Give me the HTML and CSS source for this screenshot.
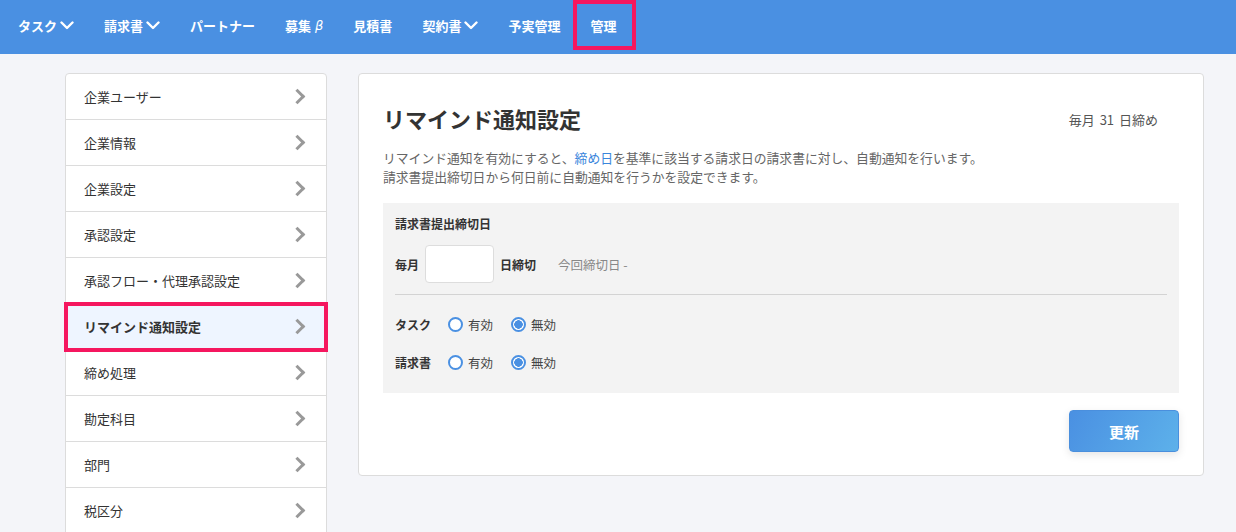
FILE: index.html
```html
<!DOCTYPE html>
<html lang="ja">
<head>
  <meta charset="UTF-8">
  <title>リマインド通知設定</title>
  <link rel="stylesheet" href="styles.css">
</head>
<body>

  <nav class="topnav">
    <a class="nav-item">タスク <svg class="caret" viewBox="0 0 14 9"><path d="M1.5 1.5 7 7l5.5-5.5"/></svg></a>
    <a class="nav-item">請求書 <svg class="caret" viewBox="0 0 14 9"><path d="M1.5 1.5 7 7l5.5-5.5"/></svg></a>
    <a class="nav-item">パートナー</a>
    <a class="nav-item">募集<i class="beta">β</i></a>
    <a class="nav-item">見積書</a>
    <a class="nav-item">契約書 <svg class="caret" viewBox="0 0 14 9"><path d="M1.5 1.5 7 7l5.5-5.5"/></svg></a>
    <a class="nav-item">予実管理</a>
    <a class="nav-item marked">管理</a>
  </nav>

  <div class="page">
    <ul class="side-menu">
      <li>企業ユーザー</li>
      <li>企業情報</li>
      <li>企業設定</li>
      <li>承認設定</li>
      <li>承認フロー・代理承認設定</li>
      <li class="active">リマインド通知設定</li>
      <li>締め処理</li>
      <li>勘定科目</li>
      <li>部門</li>
      <li>税区分</li>
    </ul>

    <section class="card">
      <div class="card-head">
        <h1>リマインド通知設定</h1>
        <span class="closing">毎月 31 日締め</span>
      </div>
      <p class="desc">
        リマインド通知を有効にすると、<a class="link">締め日</a>を基準に該当する請求日の請求書に対し、自動通知を行います。<br>
        請求書提出締切日から何日前に自動通知を行うかを設定できます。
      </p>

      <div class="settings">
        <div class="label">請求書提出締切日</div>
        <div class="deadline">
          <span class="strong">毎月</span>
          <input type="text" class="day-input">
          <span class="strong">日締切</span>
          <span class="muted">今回締切日 -</span>
        </div>
        <hr>
        <div class="radio-row">
          <span class="strong">タスク</span>
          <label class="radio"><span class="dot"></span>有効</label>
          <label class="radio"><span class="dot on"></span>無効</label>
        </div>
        <div class="radio-row">
          <span class="strong">請求書</span>
          <label class="radio"><span class="dot"></span>有効</label>
          <label class="radio"><span class="dot on"></span>無効</label>
        </div>
      </div>

      <div class="actions">
        <button class="btn-update">更新</button>
      </div>
    </section>
  </div>

</body>
</html>
```

FILE: styles.css
```css
* { box-sizing: border-box; }
body {
  margin: 0;
  background: #f4f5f9;
  color: #333;
  font-family: "Noto Sans CJK JP", "Noto Sans", "Liberation Sans", sans-serif;
  font-size: 13px;
  overflow: hidden;
}

/* top navigation */
.topnav {
  display: flex;
  align-items: flex-start;
  height: 54px;
  padding: 2px 0 0 3px;
  background: #4a90e2;
}

.nav-item {
  display: flex;
  align-items: center;
  gap: 3px;
  height: 46px;
  padding: 0 15px;
  color: #fff;
  font-weight: bold;
  font-size: 13px;
}

.nav-item .caret {
  width: 14px;
  height: 9px;
  fill: none;
  stroke: #fff;
  stroke-width: 2.4;
  stroke-linecap: round;
  stroke-linejoin: round;
}

.beta {
  font-family: "DejaVu Sans", sans-serif;
  font-weight: normal;
  font-style: italic;
  margin-left: 1px;
}

.marked {
  padding-right: 18px;
  outline: 4px solid #f5175f;
  outline-offset: -2px;
}

/* page */
.page {
  display: flex;
  align-items: flex-start;
  gap: 31px;
  padding: 19px 32px 0 65px;
}

.side-menu {
  list-style: none;
  margin: 0;
  padding: 0;
  width: 262px;
  flex: none;
  background: #fff;
  border: 1px solid #dcdcdc;
  border-radius: 4px 4px 0 0;
}

.side-menu li {
  display: flex;
  align-items: center;
  justify-content: space-between;
  height: 46px;
  padding: 0 23px 1px 18px;
  border-bottom: 1px solid #dcdcdc;
  font-size: 13px;
}

.side-menu li::after {
  content: "";
  width: 8px;
  height: 8px;
  border-top: 3px solid #999;
  border-right: 3px solid #999;
  transform: rotate(45deg);
}

.side-menu li.active {
  background: #eef5ff;
  font-weight: bold;
  outline: 4px solid #f5175f;
  outline-offset: -2px;
}

/* main card */
.card {
  flex: 1;
  background: #fff;
  border: 1px solid #dcdcdc;
  border-radius: 4px;
  padding: 29px 24px 23px 24px;
}

.card-head {
  display: flex;
  align-items: center;
  justify-content: space-between;
}

.card-head h1 {
  margin: 0;
  font-size: 22px;
  line-height: 30px;
  color: #333;
}

.closing {
  margin: 3px 21px 0 0;
  color: #555;
  font-size: 13px;
  word-spacing: 2px;
}

.desc {
  margin: 15px 0 17px;
  color: #666;
  font-size: 12.8px;
  line-height: 19px;
}

.link {
  color: #3a86dc;
}

.settings {
  background: #f3f3f3;
  padding: 12px 12px 21px;
}

.label {
  font-weight: bold;
  font-size: 12px;
  line-height: 18px;
}

.strong {
  font-weight: bold;
  font-size: 12px;
}

.deadline {
  display: flex;
  align-items: center;
  gap: 6px;
  margin-top: 12px;
}

.day-input {
  width: 69px;
  height: 38px;
  border: 1px solid #ddd;
  border-radius: 4px;
  background: #fff;
}

.muted {
  margin-left: 16px;
  color: #888;
  font-size: 12.5px;
}

.settings hr {
  margin: 11px 0 19px;
  border: none;
  border-top: 1px solid #d3d3d3;
}

.radio-row {
  display: flex;
  align-items: center;
  height: 20px;
  margin-bottom: 18px;
}

.radio-row:last-child {
  margin-bottom: 0;
}

.radio-row .strong {
  width: 53px;
}

.radio {
  display: flex;
  align-items: center;
  gap: 5px;
  margin-right: 18px;
  font-size: 12.5px;
  color: #444;
}

.dot {
  width: 15px;
  height: 15px;
  border: 2px solid #4a90e2;
  border-radius: 50%;
  background: #fff;
}

.dot.on {
  background: radial-gradient(circle, #4a90e2 0 4px, #fff 4.5px);
}

.actions {
  display: flex;
  justify-content: flex-end;
  margin-top: 17px;
}

.btn-update {
  width: 110px;
  height: 42px;
  border: 1px solid #4a8fdd;
  border-radius: 4px;
  background: linear-gradient(120deg, #4a90e2, #5db1ea);
  box-shadow: 0 3px 8px rgba(0, 0, 0, 0.1);
  color: #fff;
  font-family: inherit;
  font-size: 15px;
  font-weight: bold;
}
```
